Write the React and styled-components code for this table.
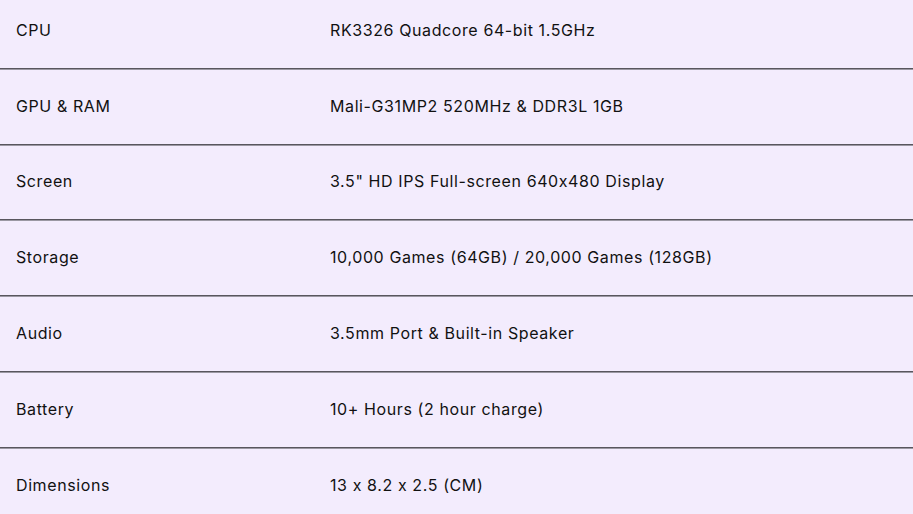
import { Fragment } from 'react';
import styled, { createGlobalStyle } from 'styled-components';

const specs = [
  ['CPU', 'RK3326 Quadcore 64-bit 1.5GHz'],
  ['GPU & RAM', 'Mali-G31MP2 520MHz & DDR3L 1GB'],
  ['Screen', '3.5" HD IPS Full-screen 640x480 Display'],
  ['Storage', '10,000 Games (64GB) / 20,000 Games (128GB)'],
  ['Audio', '3.5mm Port & Built-in Speaker'],
  ['Battery', '10+ Hours (2 hour charge)'],
  ['Dimensions', '13 x 8.2 x 2.5 (CM)'],
];

const Global = createGlobalStyle`
  html, body {
    margin: 0;
    background: #f3ecfd;
    overflow: hidden;
  }
`;

const Page = styled.div`
  width: 913px;
  height: 514px;
  overflow: hidden;
  background: #f3ecfd;
`;

const Table = styled.div`
  margin-top: -7px;
  display: grid;
  grid-template-columns: 306px 1fr;
  font-family: "Inter", "Liberation Sans", sans-serif;
  font-size: 16px;
  color: #111;
`;

const Cell = styled.div`
  box-sizing: border-box;
  height: 75.8px;
  display: flex;
  align-items: center;
  padding-left: ${(p) => (p.$value ? '24px' : '16px')};
  padding-bottom: 1px;
  border-bottom: 1px solid #58565e;
  box-shadow: 0 1px 0 #9b98a3;
  letter-spacing: 0.6px;
`;

export default function App() {
  return (
    <Page>
      <Global />
      <Table>
        {specs.map(([label, value]) => (
          <Fragment key={label}>
            <Cell>{label}</Cell>
            <Cell $value>{value}</Cell>
          </Fragment>
        ))}
      </Table>
    </Page>
  );
}
